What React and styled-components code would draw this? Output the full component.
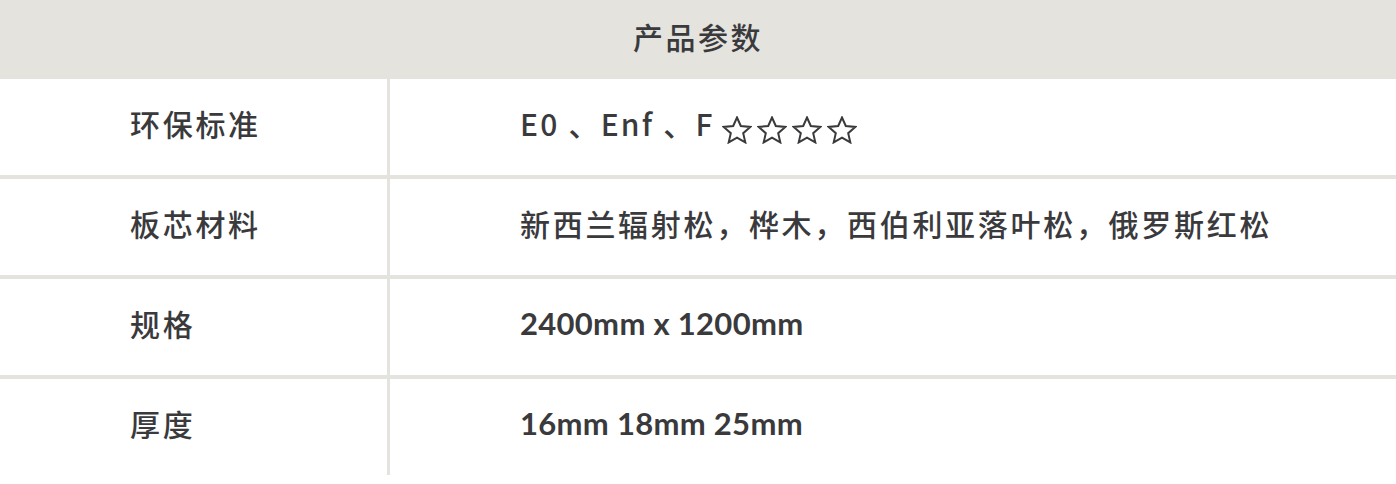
import React from "react";
import styled, { createGlobalStyle } from "styled-components";

const Global = createGlobalStyle`
  html, body { margin: 0; padding: 0; background: #ffffff; }
  body { font-family: "Noto Sans CJK SC", "Noto Sans", sans-serif; color: #3a3a3d; }
`;

const Table = styled.section`
  width: 1396px;
`;

const Header = styled.div`
  height: 79px;
  box-sizing: border-box;
  padding-bottom: 7px;
  background: #e4e3de;
  display: flex;
  align-items: center;
  justify-content: center;
  font-size: 30px;
  letter-spacing: 2.5px;
  font-weight: 500;
  color: #3a3a3d;
`;

const Body = styled.div`
  display: grid;
  grid-template-columns: 387px 1fr;
  grid-auto-rows: 96px;
  column-gap: 3px;
  row-gap: 4px;
  background: #e4e3de;
`;

const Cell = styled.div`
  background: #ffffff;
  display: flex;
  align-items: center;
  box-sizing: border-box;
  padding-left: 130px;
  padding-bottom: 8px;
  white-space: pre;
`;

const Label = styled(Cell)`
  font-size: 30px;
  letter-spacing: 2.7px;
  font-weight: 500;
`;

const Value = styled(Cell)`
  font-size: ${(p) => (p.$latin ? "31px" : "30px")};
  letter-spacing: ${(p) => (p.$latin ? "0.3px" : "2.7px")};
  font-family: ${(p) =>
    p.$latin
      ? `"Lato", "Noto Sans CJK SC", sans-serif`
      : `"Noto Sans CJK SC", "Noto Sans", sans-serif`};
  font-weight: ${(p) => (p.$latin ? 700 : 500)};
`;

const Grade = styled.span`
  letter-spacing: 2.2px;
`;

const Stars = styled.span`
  display: inline-flex;
  gap: 5px;
  margin-left: 7px;
  position: relative;
  top: 7px;
`;

const StarSvg = styled.svg`
  width: 30px;
  height: 28px;
  display: block;
`;

const Star = () => (
  <StarSvg viewBox="0 0 30 28" aria-hidden="true">
    <polygon
      points="15,1.5 18.8,10 28.3,10.9 21.2,17.2 23.3,26.4 15,21.6 6.7,26.4 8.8,17.2 1.7,10.9 11.2,10"
      fill="none"
      stroke="#3a3a3d"
      strokeWidth="2"
      strokeLinejoin="miter"
    />
  </StarSvg>
);

const rows = [
  {
    label: "环保标准",
    value: (
      <>
        <Grade>E0 、Enf 、F</Grade>
        <Stars>
          <Star />
          <Star />
          <Star />
          <Star />
        </Stars>
      </>
    ),
  },
  { label: "板芯材料", value: "新西兰辐射松，桦木，西伯利亚落叶松，俄罗斯红松" },
  { label: "规格", value: "2400mm x 1200mm", latin: true },
  { label: "厚度", value: "16mm 18mm 25mm", latin: true },
];

export default function App() {
  return (
    <>
      <Global />
      <Table>
        <Header>产品参数</Header>
        <Body>
          {rows.map((r) => (
            <React.Fragment key={r.label}>
              <Label>{r.label}</Label>
              <Value $latin={r.latin}>{r.value}</Value>
            </React.Fragment>
          ))}
        </Body>
      </Table>
    </>
  );
}
